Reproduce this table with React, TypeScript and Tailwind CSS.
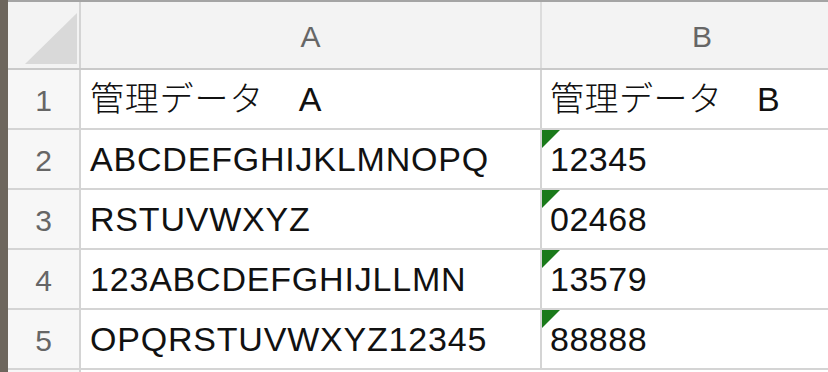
const font = { fontFamily: '"Liberation Sans", "Noto Sans CJK JP", sans-serif' };

const rows: { n: number; a: string; b: string; flag: boolean }[] = [
  { n: 1, a: "管理データ　A", b: "管理データ　B", flag: false },
  { n: 2, a: "ABCDEFGHIJKLMNOPQ", b: "12345", flag: true },
  { n: 3, a: "RSTUVWXYZ", b: "02468", flag: true },
  { n: 4, a: "123ABCDEFGHIJLLMN", b: "13579", flag: true },
  { n: 5, a: "OPQRSTUVWXYZ12345", b: "88888", flag: true },
];

const SelectAll = () => (
  <svg width="52" height="51" viewBox="0 0 52 51" className="absolute left-[17px] top-[11px]">
    <polygon points="52,0 52,51 0,51" fill="#d9d9d9" />
  </svg>
);

const App = () => {
  return (
    <div className="flex h-[372px] w-[828px] overflow-hidden bg-white font-light" style={font}>
      <div className="w-[8px] shrink-0 bg-[#6d665d]" />
      <div className="flex flex-1 flex-col overflow-hidden border-t-2 border-[#a4a4a4]">
        {/* column headers */}
        <div className="grid h-[68px] shrink-0 grid-cols-[73px_461px_320px] border-b-2 border-[#c9c9c9] bg-[#f3f3f3]">
          <div className="relative border-r-2 border-[#d4d4d4]">
            <SelectAll />
          </div>
          <div className="flex items-center justify-center border-r-2 border-[#dcdcdc] pt-[2px] text-[30px] text-[#666]">
            A
          </div>
          <div className="flex items-center justify-center pt-[2px] text-[30px] text-[#666]">B</div>
        </div>
        {rows.map((r) => (
          <div
            key={r.n}
            className="grid h-[60px] shrink-0 grid-cols-[73px_461px_320px] border-b-2 border-[#d4d4d4]"
          >
            <div className="flex items-center justify-center border-r-2 border-[#d4d4d4] bg-[#f7f7f7] pt-[2px] text-[30px] text-[#666]">
              {r.n}
            </div>
            <div className="flex items-center whitespace-nowrap border-r-2 border-[#d4d4d4] pl-[9px] pt-[1px] text-[34px] tracking-[0.8px] text-[#111]">
              {r.a}
            </div>
            <div className="relative flex items-center whitespace-nowrap pl-[8px] pt-[1px] text-[34px] tracking-[0.5px] text-[#111]">
              {r.flag && (
                <svg width="18" height="18" viewBox="0 0 18 18" className="absolute left-0 top-0">
                  <polygon points="0,0 18,0 0,18" fill="#1b7a1b" />
                </svg>
              )}
              {r.b}
            </div>
          </div>
        ))}
        <div className="grid flex-1 grid-cols-[73px_1fr]">
          <div className="border-r-2 border-[#d4d4d4] bg-[#f7f7f7]" />
          <div />
        </div>
      </div>
    </div>
  );
};

export default App;
